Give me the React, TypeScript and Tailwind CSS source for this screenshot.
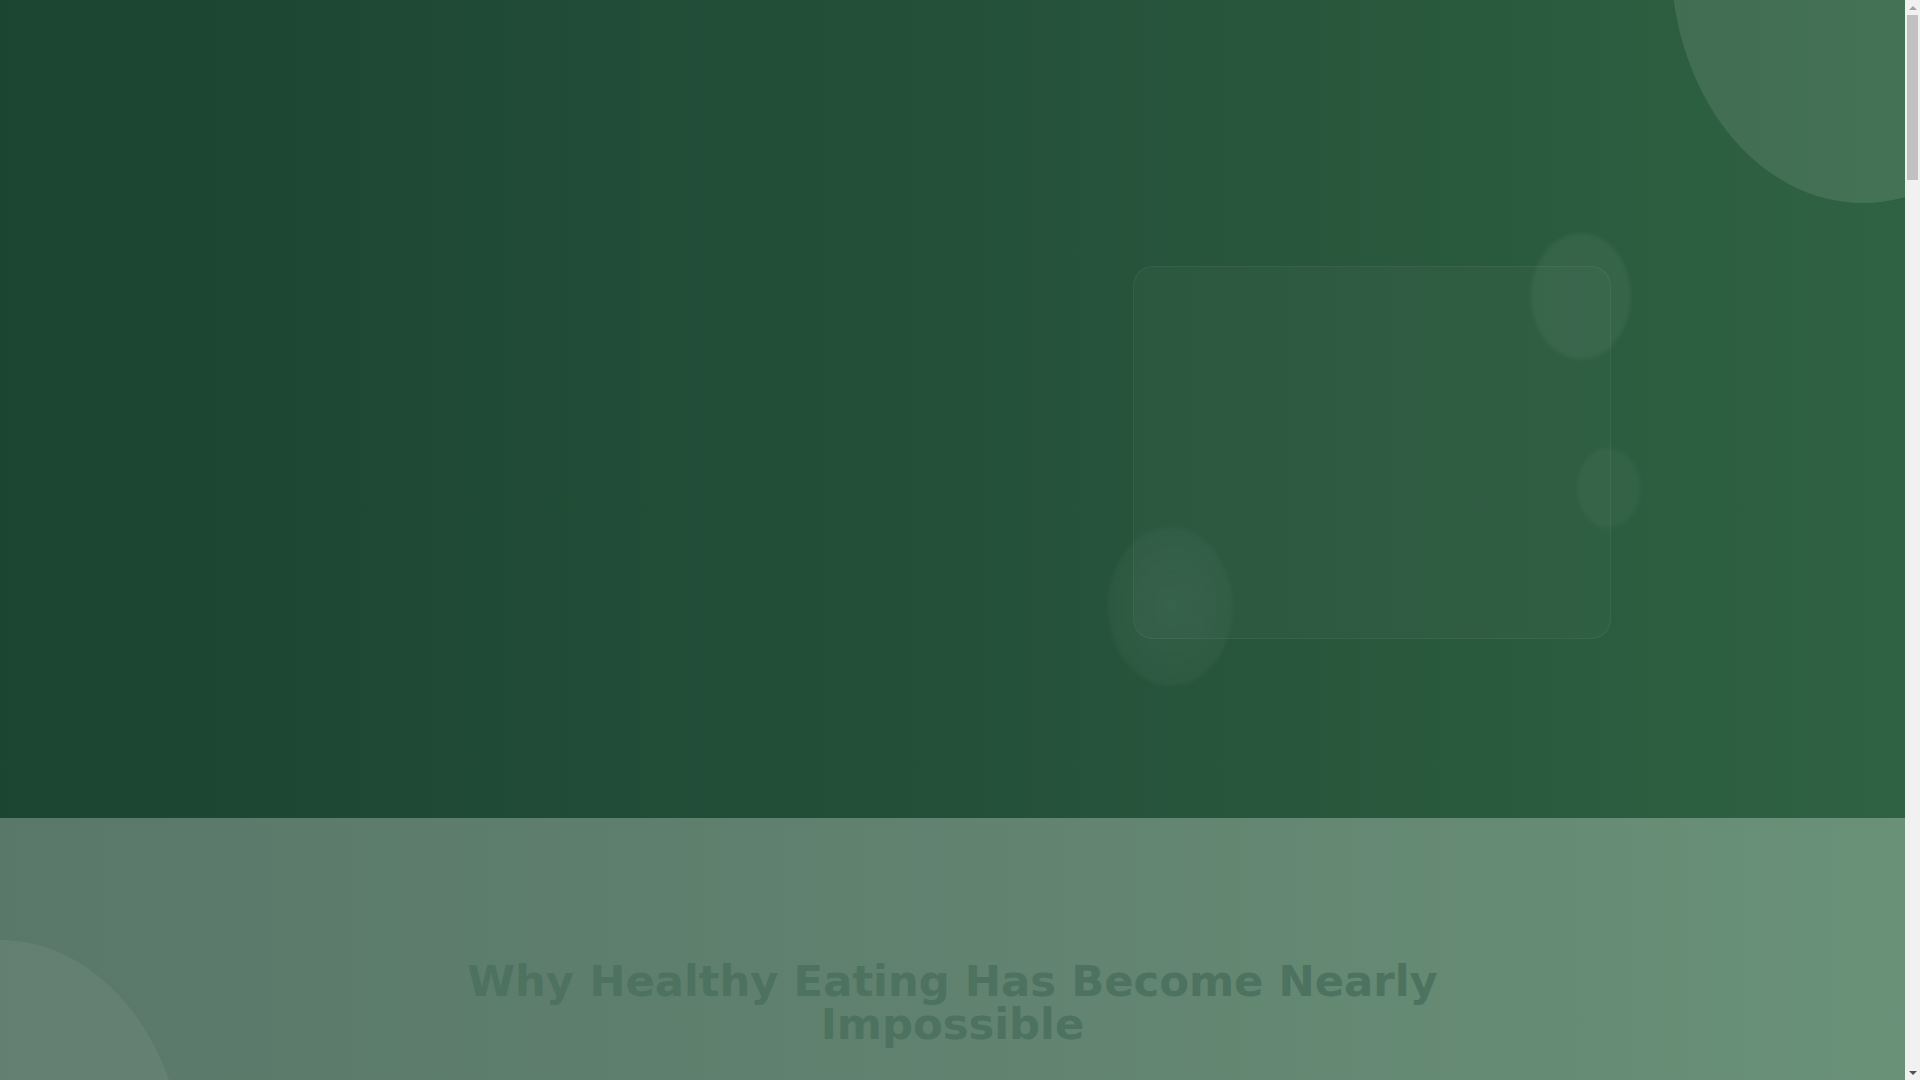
import React from "react";

/* ------------------------------- Hero section ------------------------------ */

function Hero() {
  return (
    <section className="relative h-[818px] overflow-hidden bg-linear-to-r from-[#1b4431] via-[#245039] to-[#2f6242]">
      {/* Deko: großer Kreis oben rechts */}
      <div className="pointer-events-none absolute -right-[150px] -top-[285px] h-[488px] w-[384px] rounded-[50%] bg-white/10" />

      <div className="mx-auto flex w-full max-w-[1317px] justify-end pt-[266px]">
        <div className="relative h-[373px] w-[478px]">
          {/* schwebende Blasen */}
          <div className="pointer-events-none absolute left-[398px] -top-[33px] h-[126px] w-[100px] rounded-[50%] bg-white/[0.05] blur-[2px]" />
          <div className="pointer-events-none absolute left-[444px] top-[182px] h-[80px] w-[64px] rounded-[50%] bg-white/[0.035] blur-[2px]" />
          <div className="pointer-events-none absolute -left-[25px] top-[261px] h-[159px] w-[125px] rounded-[50%] bg-radial from-white/[0.06] to-white/[0.025] blur-[2px]" />
          <div className="relative h-full w-full rounded-[20px] border border-white/[0.05] bg-white/[0.025]" />
        </div>
      </div>
    </section>
  );
}

/* ------------------------------ Problem section ---------------------------- */

function Problem() {
  return (
    <section className="relative min-h-[6080px] overflow-hidden bg-linear-to-r from-[#5a786a] via-[#61826f] to-[#699178]">
      <div className="pointer-events-none absolute -left-[186px] top-[122px] h-[480px] w-[372px] rounded-[50%] bg-white/[0.06]" />

      <div className="relative mx-auto max-w-5xl px-4 pt-[142px]">
        <h2 className="text-center font-['DejaVu_Sans',sans-serif] text-[43.3px] font-bold leading-[43px] text-[#4d725f]">
          Why Healthy Eating Has Become Nearly Impossible
        </h2>
      </div>
    </section>
  );
}

/* ------------------------------- Scrollbar -------------------------------- */

function ScrollTrack() {
  return (
    <div className="flex h-full w-[15px] shrink-0 flex-col items-center bg-[#f1f1f1]">
      <div className="flex h-[15px] w-full items-center justify-center">
        <div className="h-0 w-0 border-x-[4px] border-b-[4px] border-x-transparent border-b-[#a3a3a3]" />
      </div>
      <div className="h-[165px] w-[11px] bg-[#c1c1c1]" />
      <div className="flex-1" />
      <div className="flex h-[15px] w-full items-center justify-center">
        <div className="h-0 w-0 border-x-[4px] border-t-[4px] border-x-transparent border-t-[#505050]" />
      </div>
    </div>
  );
}

export default function App() {
  return (
    <div className="flex h-screen overflow-hidden font-['DejaVu_Sans',sans-serif]">
      <main className="min-w-0 flex-1 overflow-hidden">
        <Hero />
        <Problem />
      </main>
      <ScrollTrack />
    </div>
  );
}
